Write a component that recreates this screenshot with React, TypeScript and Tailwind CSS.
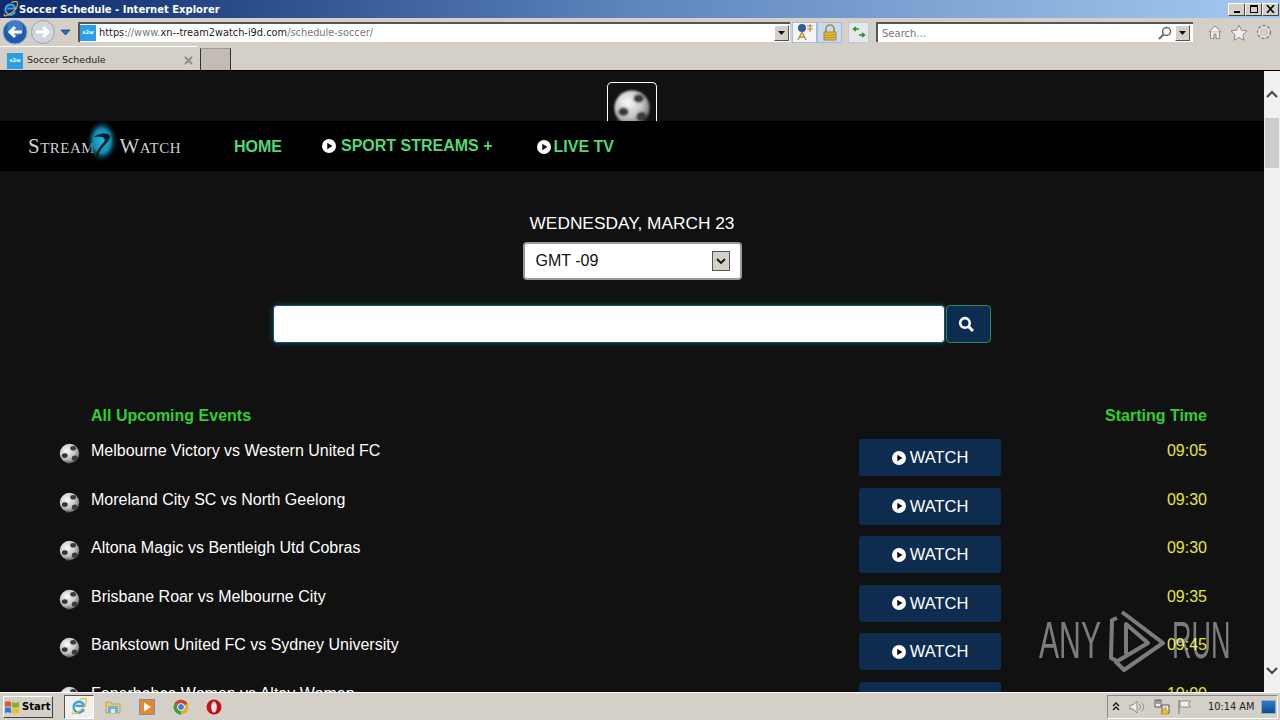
import { useId } from "react";

const events = [
  { name: "Melbourne Victory vs Western United FC", time: "09:05" },
  { name: "Moreland City SC vs North Geelong", time: "09:30" },
  { name: "Altona Magic vs Bentleigh Utd Cobras", time: "09:30" },
  { name: "Brisbane Roar vs Melbourne City", time: "09:35" },
  { name: "Bankstown United FC vs Sydney University", time: "09:45" },
  { name: "Fenerbahce Women vs Altay Women", time: "10:00" },
];

const Ball = ({ size }: { size: number }) => {
  const id = useId();
  return (
    <svg width={size} height={size} viewBox="0 0 40 40">
      <defs>
        <radialGradient id={`${id}g`} cx="38%" cy="35%" r="70%">
          <stop offset="0%" stopColor="#fafafa" />
          <stop offset="60%" stopColor="#c4c4c4" />
          <stop offset="100%" stopColor="#666" />
        </radialGradient>
        <filter id={`${id}b`} x="-10%" y="-10%" width="120%" height="120%">
          <feGaussianBlur stdDeviation="1.2" />
        </filter>
      </defs>
      <g filter={`url(#${id}b)`}>
        <circle cx="20" cy="20" r="18.5" fill={`url(#${id}g)`} />
        <ellipse cx="27" cy="10" rx="5.5" ry="4.5" fill="#3a3a3a" />
        <ellipse cx="11" cy="24" rx="5.5" ry="4.5" fill="#363636" />
        <ellipse cx="30" cy="29" rx="5.5" ry="5" fill="#3a3a3a" />
        <ellipse cx="18" cy="37" rx="4" ry="2" fill="#666" />
      </g>
    </svg>
  );
};

const PlayDot = ({ size }: { size: number }) => (
  <svg width={size} height={size} viewBox="0 0 16 16" className="shrink-0">
    <circle cx="8" cy="8" r="8" fill="#fff" />
    <path d="M6 4.2 12 8l-6 3.8z" fill="#0d0d0d" />
  </svg>
);

const SiteIcon = () => (
  <span className="flex h-[16px] w-[16px] shrink-0 items-center justify-center bg-[#2a9fe8] text-[5px] font-bold text-white">
    s2w
  </span>
);

const DropBtn = () => (
  <span className="flex h-[16px] w-[15px] shrink-0 items-center justify-center border border-t-white border-r-[#555] border-b-[#555] border-l-white bg-[#d4d0c8]">
    <svg width="7" height="4" viewBox="0 0 7 4">
      <path d="M0 0h7L3.500 4z" fill="#111" />
    </svg>
  </span>
);

const WinBtn = ({ children }: { children: React.ReactNode }) => (
  <span className="flex h-[13px] w-[17px] items-center justify-center border border-t-white border-r-[#444] border-b-[#444] border-l-white bg-[#d4d0c8]">
    {children}
  </span>
);

const IeLogo = ({ size }: { size: number }) => (
  <svg width={size} height={size} viewBox="0 0 20 20">
    <path d="M15.500 12.500a6 6 0 1 1 .3-3.700H6.200" fill="none" stroke="#3aa0e0" strokeWidth="2.600" />
    <path d="M3 15C1 19 6 18 11 14s8-9 7-12-5-1-7 0" fill="none" stroke="#e8b820" strokeWidth="1.300" />
  </svg>
);

const Chrome = () => (
  <div className="shrink-0 bg-[#d4d0c8] font-['DejaVu_Sans',sans-serif]">
    <div className="flex h-[18px] items-center bg-gradient-to-r from-[#0c2a6c] via-[#5f86bd] to-[#a6caf0] pr-[1px] pl-[2px]">
      <IeLogo size={17} />
      <span className="text-[10px] font-bold whitespace-nowrap text-white">
        Soccer Schedule - Internet Explorer
      </span>
      <div className="ml-auto flex">
        <WinBtn>
          <span className="mt-[6px] h-[2px] w-[6px] bg-black" />
        </WinBtn>
        <WinBtn>
          <span className="h-[8px] w-[8px] border border-t-2 border-black" />
        </WinBtn>
        <WinBtn>
          <svg width="9" height="8" viewBox="0 0 9 8">
            <path d="M1 0l7 8M8 0 1 8" stroke="#000" strokeWidth="1.600" />
          </svg>
        </WinBtn>
      </div>
    </div>
    <div className="flex h-[28px] items-center pl-[2px]">
      <svg width="26" height="26" viewBox="0 0 26 26" className="shrink-0">
        <circle cx="13" cy="13" r="12" fill="#1e5cb0" stroke="#8da6c4" />
        <circle cx="13" cy="9" r="8" fill="#5e9ce0" opacity="0.5" />
        <path d="M20 13H8m5-5-5 5 5 5" fill="none" stroke="#fff" strokeWidth="3" />
      </svg>
      <svg width="26" height="26" viewBox="0 0 26 26" className="ml-[2px] shrink-0">
        <circle cx="13" cy="13" r="11.500" fill="#cfd6de" stroke="#98a4b0" />
        <path d="M6 13h12m-5-5 5 5-5 5" fill="none" stroke="#fff" strokeWidth="3" />
      </svg>
      <svg width="11" height="7" viewBox="0 0 11 7" className="ml-[4px] shrink-0">
        <path d="M1 1h9L5.500 6z" fill="#2a6cb8" stroke="#16305a" strokeWidth="0.700" />
      </svg>
      <div className="ml-[7px] flex h-[20px] w-[712px] shrink-0 items-center border-t-2 border-l-2 border-t-[#555] border-l-[#555] bg-white">
        <SiteIcon />
        <span className="mt-[1px] ml-[3px] text-[9.800px] whitespace-nowrap text-[#222]">
          https:<span className="text-[#777]">//www.</span>xn--tream2watch-i9d.com
          <span className="text-[#777]">/schedule-soccer/</span>
        </span>
        <span className="mr-[1px] ml-auto">
          <DropBtn />
        </span>
      </div>
      <div className="ml-[2px] flex h-[21px] w-[25px] shrink-0 items-center justify-center border border-[#a8bcd8] bg-[#f2f5fa]">
        <svg width="18" height="18" viewBox="0 0 18 18">
          <circle cx="6" cy="5" r="4" fill="#2c5f96" />
          <path d="M6 9 2 17M6 9l4 8M3 14h6" stroke="#b8901c" strokeWidth="1.400" fill="none" />
          <path d="M11 3h6M14 1v8M11 6h6" stroke="#c48a1c" strokeWidth="1.200" fill="none" />
        </svg>
      </div>
      <div className="flex h-[21px] w-[25px] shrink-0 items-center justify-center border border-[#a8bcd8] bg-[#c6daf2]">
        <svg width="14" height="17" viewBox="0 0 14 17">
          <path d="M3 8V5a4 4 0 0 1 8 0v3" fill="none" stroke="#a88a30" strokeWidth="1.600" />
          <rect x="1" y="8" width="12" height="8" fill="#e0b93c" stroke="#a88a30" />
          <path d="M1 11h12M1 13.500h12" stroke="#a88a30" strokeWidth="0.700" />
        </svg>
      </div>
      <div className="ml-[6px] flex h-[21px] w-[21px] shrink-0 items-center justify-center border border-[#c0c8d2] bg-[#e4e8ec]">
        <svg width="16" height="12" viewBox="0 0 16 12">
          <path d="M8 3H3M5 1 2.500 3 5 5" fill="none" stroke="#2f8a2f" strokeWidth="1.500" />
          <path d="M8 9h5M11 7l2.500 2-2.500 2" fill="none" stroke="#2f8a2f" strokeWidth="1.500" />
        </svg>
      </div>
      <div className="ml-[7px] flex h-[20px] w-[317px] shrink-0 items-center border-t-2 border-l-2 border-t-[#555] border-l-[#555] bg-white">
        <span className="mt-[1px] ml-[4px] text-[10px] text-[#777]">Search...</span>
        <svg width="14" height="14" viewBox="0 0 14 14" className="mr-[3px] ml-auto">
          <circle cx="8.500" cy="5.500" r="4" fill="none" stroke="#666" strokeWidth="1.500" />
          <path d="M5.500 8.500 1 13" stroke="#666" strokeWidth="2" />
        </svg>
        <span className="mr-[3px]">
          <DropBtn />
        </span>
      </div>
      <svg width="16" height="16" viewBox="0 0 16 16" className="ml-[14px] shrink-0">
        <path d="M1 8.500 8 2l7 6.500M3.500 7v7.500h3.500V10h2v4.500h3.500V7" fill="#eee" stroke="#8f8c86" />
      </svg>
      <svg width="18" height="17" viewBox="0 0 18 17" className="ml-[7px] shrink-0">
        <path d="m9 1 2.400 5.200 5.600.7-4.100 3.800 1.100 5.600L9 13.500l-5 2.800 1.100-5.600L1 6.900l5.600-.7z" fill="#eee" stroke="#8f8c86" />
      </svg>
      <svg width="18" height="18" viewBox="0 0 18 18" className="ml-[7px] shrink-0">
        <circle cx="9" cy="9" r="5.500" fill="none" stroke="#8f8c86" strokeWidth="3.500" strokeDasharray="2.500 1.500" />
        <circle cx="9" cy="9" r="4.800" fill="none" stroke="#eee" strokeWidth="1.500" />
      </svg>
    </div>
    <div className="flex h-[25px] items-end border-b border-black">
      <div className="flex h-[24px] w-[197px] items-center border-t border-white pt-[4px] pl-[7px]">
        <SiteIcon />
        <span className="ml-[4px] text-[9.500px] text-[#222]">Soccer Schedule</span>
        <svg width="9" height="9" viewBox="0 0 9 9" className="mr-[4px] ml-auto">
          <path d="m1 1 7 7M8 1 1 8" stroke="#8f8c86" strokeWidth="1.800" />
        </svg>
      </div>
      <div className="ml-[3px] h-[22px] w-[31px] border-x border-t border-x-[#333] border-t-[#999] bg-[#c2bbb6]" />
    </div>
  </div>
);

const Nav = () => (
  <nav className="flex h-[50px] shrink-0 items-center bg-black pl-[28px] font-['Liberation_Sans',Arial,sans-serif] text-[#4fd97b]">
    <div className="relative flex w-[153px] items-center justify-between font-['Liberation_Serif',serif] text-[#cfcfcf]">
      <span className="text-[21px] leading-none tracking-[0.5px] [font-variant:small-caps]">Stream</span>
      <span className="text-[21px] leading-none tracking-[0.5px] [font-variant:small-caps]">Watch</span>
      <svg width="36" height="46" viewBox="0 0 36 46" className="absolute top-[-17px] left-[56px]">
        <defs>
          <radialGradient id="logoGlow">
            <stop offset="0%" stopColor="#22b4dc" />
            <stop offset="55%" stopColor="#128aae" />
            <stop offset="100%" stopColor="#000" stopOpacity="0" />
          </radialGradient>
        </defs>
        <ellipse cx="18" cy="22" rx="16" ry="22" fill="url(#logoGlow)" />
        <path d="M10 18c4-4 14-5 16-1 1 5-9 10-12 20 5-2 4-1-3 3 1-12 10-15 10-20-2-3-7-3-11-2z" fill="#04202a" />
      </svg>
    </div>
    <span className="mt-[1px] ml-[53px] text-[16px] font-bold">HOME</span>
    <span className="mt-[-1px] ml-[40px] flex items-center gap-[5px] text-[16px] font-bold">
      <PlayDot size={14} />
      SPORT STREAMS +
    </span>
    <span className="mt-[1px] ml-[44px] flex items-center gap-[3px] text-[16px] font-bold">
      <PlayDot size={14} />
      LIVE TV
    </span>
  </nav>
);

const Row = ({ name, time }: { name: string; time: string }) => (
  <div className="flex h-[48.500px] shrink-0 items-start">
    <div className="w-[32px] shrink-0 pt-[3px]">
      <Ball size={21} />
    </div>
    <span className="mt-[-1px] w-[768px] shrink-0 text-[16px] leading-[24px] whitespace-nowrap text-white">{name}</span>
    <button className="mt-[-1px] flex h-[37px] w-[142px] shrink-0 items-center justify-center gap-[4px] rounded-[3px] bg-[#0c2d50] text-[16.500px] text-white">
      <PlayDot size={14} />
      WATCH
    </button>
    <span className="mt-[-1px] ml-auto text-[16px] leading-[24px] text-[#e6e637]">{time}</span>
  </div>
);

const Page = () => (
  <main className="min-w-0 flex-1 overflow-hidden bg-[#111111] font-['Liberation_Sans',Arial,sans-serif]">
    <div className="flex h-[50px] items-end justify-center">
      <div className="flex h-[39px] w-[50px] items-start justify-center overflow-hidden rounded-t-[5px] border border-b-0 border-white pt-[6px]">
        <Ball size={38} />
      </div>
    </div>
    <Nav />
    <div className="flex flex-col items-center">
      <h1 className="mt-[41px] text-[17.300px] leading-[22px] text-white">WEDNESDAY, MARCH 23</h1>
      <div className="mt-[8px] flex h-[38px] w-[219px] items-center rounded-[4px] border-2 border-[#999] bg-white pr-[10px] pl-[11px] text-[16px] text-[#111]">
        GMT -09
        <span className="ml-auto flex h-[20px] w-[18px] items-center justify-center border border-[#555] bg-[#d4d0c8]">
          <svg width="10" height="7" viewBox="0 0 10 7">
            <path d="m1 1 4 4 4-4" fill="none" stroke="#111" strokeWidth="1.800" />
          </svg>
        </span>
      </div>
      <div className="mt-[25px] ml-[-1px] flex gap-[1px]">
        <div className="h-[38px] w-[672px] rounded-[4px] border border-[#14506b] bg-white shadow-[0_0_5px_#14506b]" />
        <div className="flex h-[38px] w-[45px] items-center justify-center rounded-[4px] border border-[#2a8a5a] bg-[#0c2d50] pr-[4px]">
          <svg width="16" height="16" viewBox="0 0 15 15">
            <circle cx="6.500" cy="6.500" r="4.500" fill="none" stroke="#fff" strokeWidth="2.400" />
            <path d="m10 10 4 4" stroke="#fff" strokeWidth="2.800" />
          </svg>
        </div>
      </div>
    </div>
    <div className="mt-[61px] ml-[59px] w-[1148px]">
      <div className="flex h-[24px] items-center pl-[32px] text-[16px] font-bold text-[#2fd02f]">
        <span>All Upcoming Events</span>
        <span className="ml-auto">Starting Time</span>
      </div>
      <div className="mt-[12px] flex flex-col">
        {events.map((e) => (
          <Row key={e.name} name={e.name} time={e.time} />
        ))}
      </div>
    </div>
  </main>
);

const Scrollbar = () => (
  <div className="flex w-[16px] shrink-0 flex-col items-center bg-[#f0f0f0]">
    <svg width="12" height="8" viewBox="0 0 12 8" className="mt-[19px]">
      <path d="m1 7 5-5 5 5" fill="none" stroke="#444" strokeWidth="2" />
    </svg>
    <div className="mt-[20px] h-[50px] w-[14px] bg-[#cdcdcd]" />
    <svg width="12" height="8" viewBox="0 0 12 8" className="mt-auto mb-[17px]">
      <path d="m1 1 5 5 5-5" fill="none" stroke="#444" strokeWidth="2" />
    </svg>
  </div>
);

const Taskbar = () => (
  <div className="flex h-[28px] shrink-0 items-center border-t border-white bg-[#d4d0c8] pl-[3px] font-['DejaVu_Sans',sans-serif]">
    <div className="flex h-[22px] w-[50px] items-center gap-[2px] border border-t-white border-r-[#444] border-b-[#444] border-l-white text-[10px] font-bold text-black">
      <svg width="16" height="16" viewBox="0 0 16 16" className="shrink-0">
        <path d="M1 3c2-1 4-1 6 0v5C5 7 3 7 1 8z" fill="#e2562a" />
        <path d="M8 3c2 1 4 1 7 0v5c-3 1-5 1-7 0z" fill="#7ab62c" />
        <path d="M1 9c2-1 4-1 6 0v5c-2-1-4-1-6 0z" fill="#2c7ad6" />
        <path d="M8 9c2 1 4 1 7 0v5c-3 1-5 1-7 0z" fill="#f0c020" />
      </svg>
      Start
    </div>
    <div className="ml-[11px] flex h-[24px] w-[30px] items-center justify-center border border-t-[#555] border-r-white border-b-white border-l-[#555] bg-[#f2f0ec]">
      <IeLogo size={18} />
    </div>
    <svg width="16" height="16" viewBox="0 0 16 16" className="ml-[11px]">
      <path d="M1 3h5l1 2h8v9H1z" fill="#e8cb72" stroke="#a88e40" strokeWidth="0.600" />
      <rect x="3" y="7" width="10" height="7" fill="#6db2d8" />
      <rect x="6" y="10" width="4" height="4" fill="#e8e8e8" />
    </svg>
    <div className="ml-[18px] flex h-[16px] w-[16px] items-center justify-center border border-[#6a94c4] bg-[#e8872a]">
      <svg width="10" height="10" viewBox="0 0 10 10">
        <path d="M2 0.500 9 5 2 9.500z" fill="#fff" />
      </svg>
    </div>
    <svg width="16" height="16" viewBox="0 0 16 16" className="ml-[18px]">
      <circle cx="8" cy="8" r="7.500" fill="#d8b42c" />
      <path d="M8 8 1.500 4.500A7.500 7.500 0 0 1 14.500 4.500z" fill="#d2402e" />
      <path d="M8 8 1.500 4.500A7.500 7.500 0 0 0 8 15.500z" fill="#3f9b45" />
      <circle cx="8" cy="8" r="3.500" fill="#3f7fd8" stroke="#fff" />
    </svg>
    <svg width="16" height="16" viewBox="0 0 16 16" className="ml-[17px]">
      <circle cx="8" cy="8" r="7.500" fill="#c80f18" />
      <ellipse cx="8" cy="8" rx="2.800" ry="5.500" fill="#f4e8e0" />
    </svg>
    <div className="mr-[2px] ml-auto flex h-[24px] w-[171px] items-center border border-t-[#888] border-r-white border-b-white border-l-[#888] pl-[4px] text-[#333]">
      <svg width="8" height="10" viewBox="0 0 8 10">
        <path d="m1 4 3-3 3 3M1 8l3-3 3 3" fill="none" stroke="#111" strokeWidth="1.300" />
      </svg>
      <svg width="16" height="14" viewBox="0 0 16 14" className="ml-[9px]">
        <path d="M1 5h3l4-4v12L4 9H1z" fill="#eee" stroke="#8f8c86" />
        <path d="M10 4c2 2 2 4 0 6M12.500 2.500c3 3 3 6 0 9" fill="none" stroke="#8f8c86" />
      </svg>
      <svg width="16" height="16" viewBox="0 0 16 16" className="ml-[9px]">
        <path d="M1 1h6v7H1zM8 6h7v8H8z" fill="#eee" stroke="#555" />
        <path d="M3 1v4M5 1v4" stroke="#555" />
        <path d="m11 8 4 7H7z" fill="#edc024" stroke="#9a7a10" strokeWidth="0.600" />
      </svg>
      <svg width="16" height="16" viewBox="0 0 16 16" className="ml-[7px]">
        <path d="M2 1v14" stroke="#8f8c86" strokeWidth="1.500" />
        <path d="M3 2h11l-3 3 3 3H3z" fill="#eee" stroke="#8f8c86" />
      </svg>
      <span className="mt-[1px] ml-[15px] text-[9.800px] whitespace-nowrap text-[#222]">10:14 AM</span>
      <span className="mr-[1px] ml-auto h-[14px] w-[15px] border border-[#9ab] bg-gradient-to-b from-[#2c7fd0] to-[#104a8c]" />
    </div>
  </div>
);

const Watermark = () => (
  <div className="pointer-events-none absolute top-[608px] left-[1039px] flex h-[64px] w-[194px] items-center font-['Liberation_Sans',Arial,sans-serif] text-[52px] leading-none text-white/45">
    <span className="w-[64px] origin-left scale-x-[0.58] whitespace-nowrap">ANY</span>
    <svg width="60" height="64" viewBox="0 0 60 64" className="ml-[5px] shrink-0">
      <path
        d="M9 10 4 12 3 50l6 3M14 4l41 31-39 27-8-8 32-19-22-19v30"
        fill="none"
        stroke="#fff"
        strokeOpacity="0.45"
        strokeWidth="4"
        strokeLinejoin="round"
      />
    </svg>
    <span className="ml-[4px] w-[58px] origin-left scale-x-[0.52] whitespace-nowrap">RUN</span>
  </div>
);

export default function App() {
  return (
    <div className="relative flex h-[720px] w-[1280px] flex-col overflow-hidden">
      <Chrome />
      <div className="flex min-h-0 flex-1">
        <Page />
        <Scrollbar />
      </div>
      <Taskbar />
      <Watermark />
    </div>
  );
}
